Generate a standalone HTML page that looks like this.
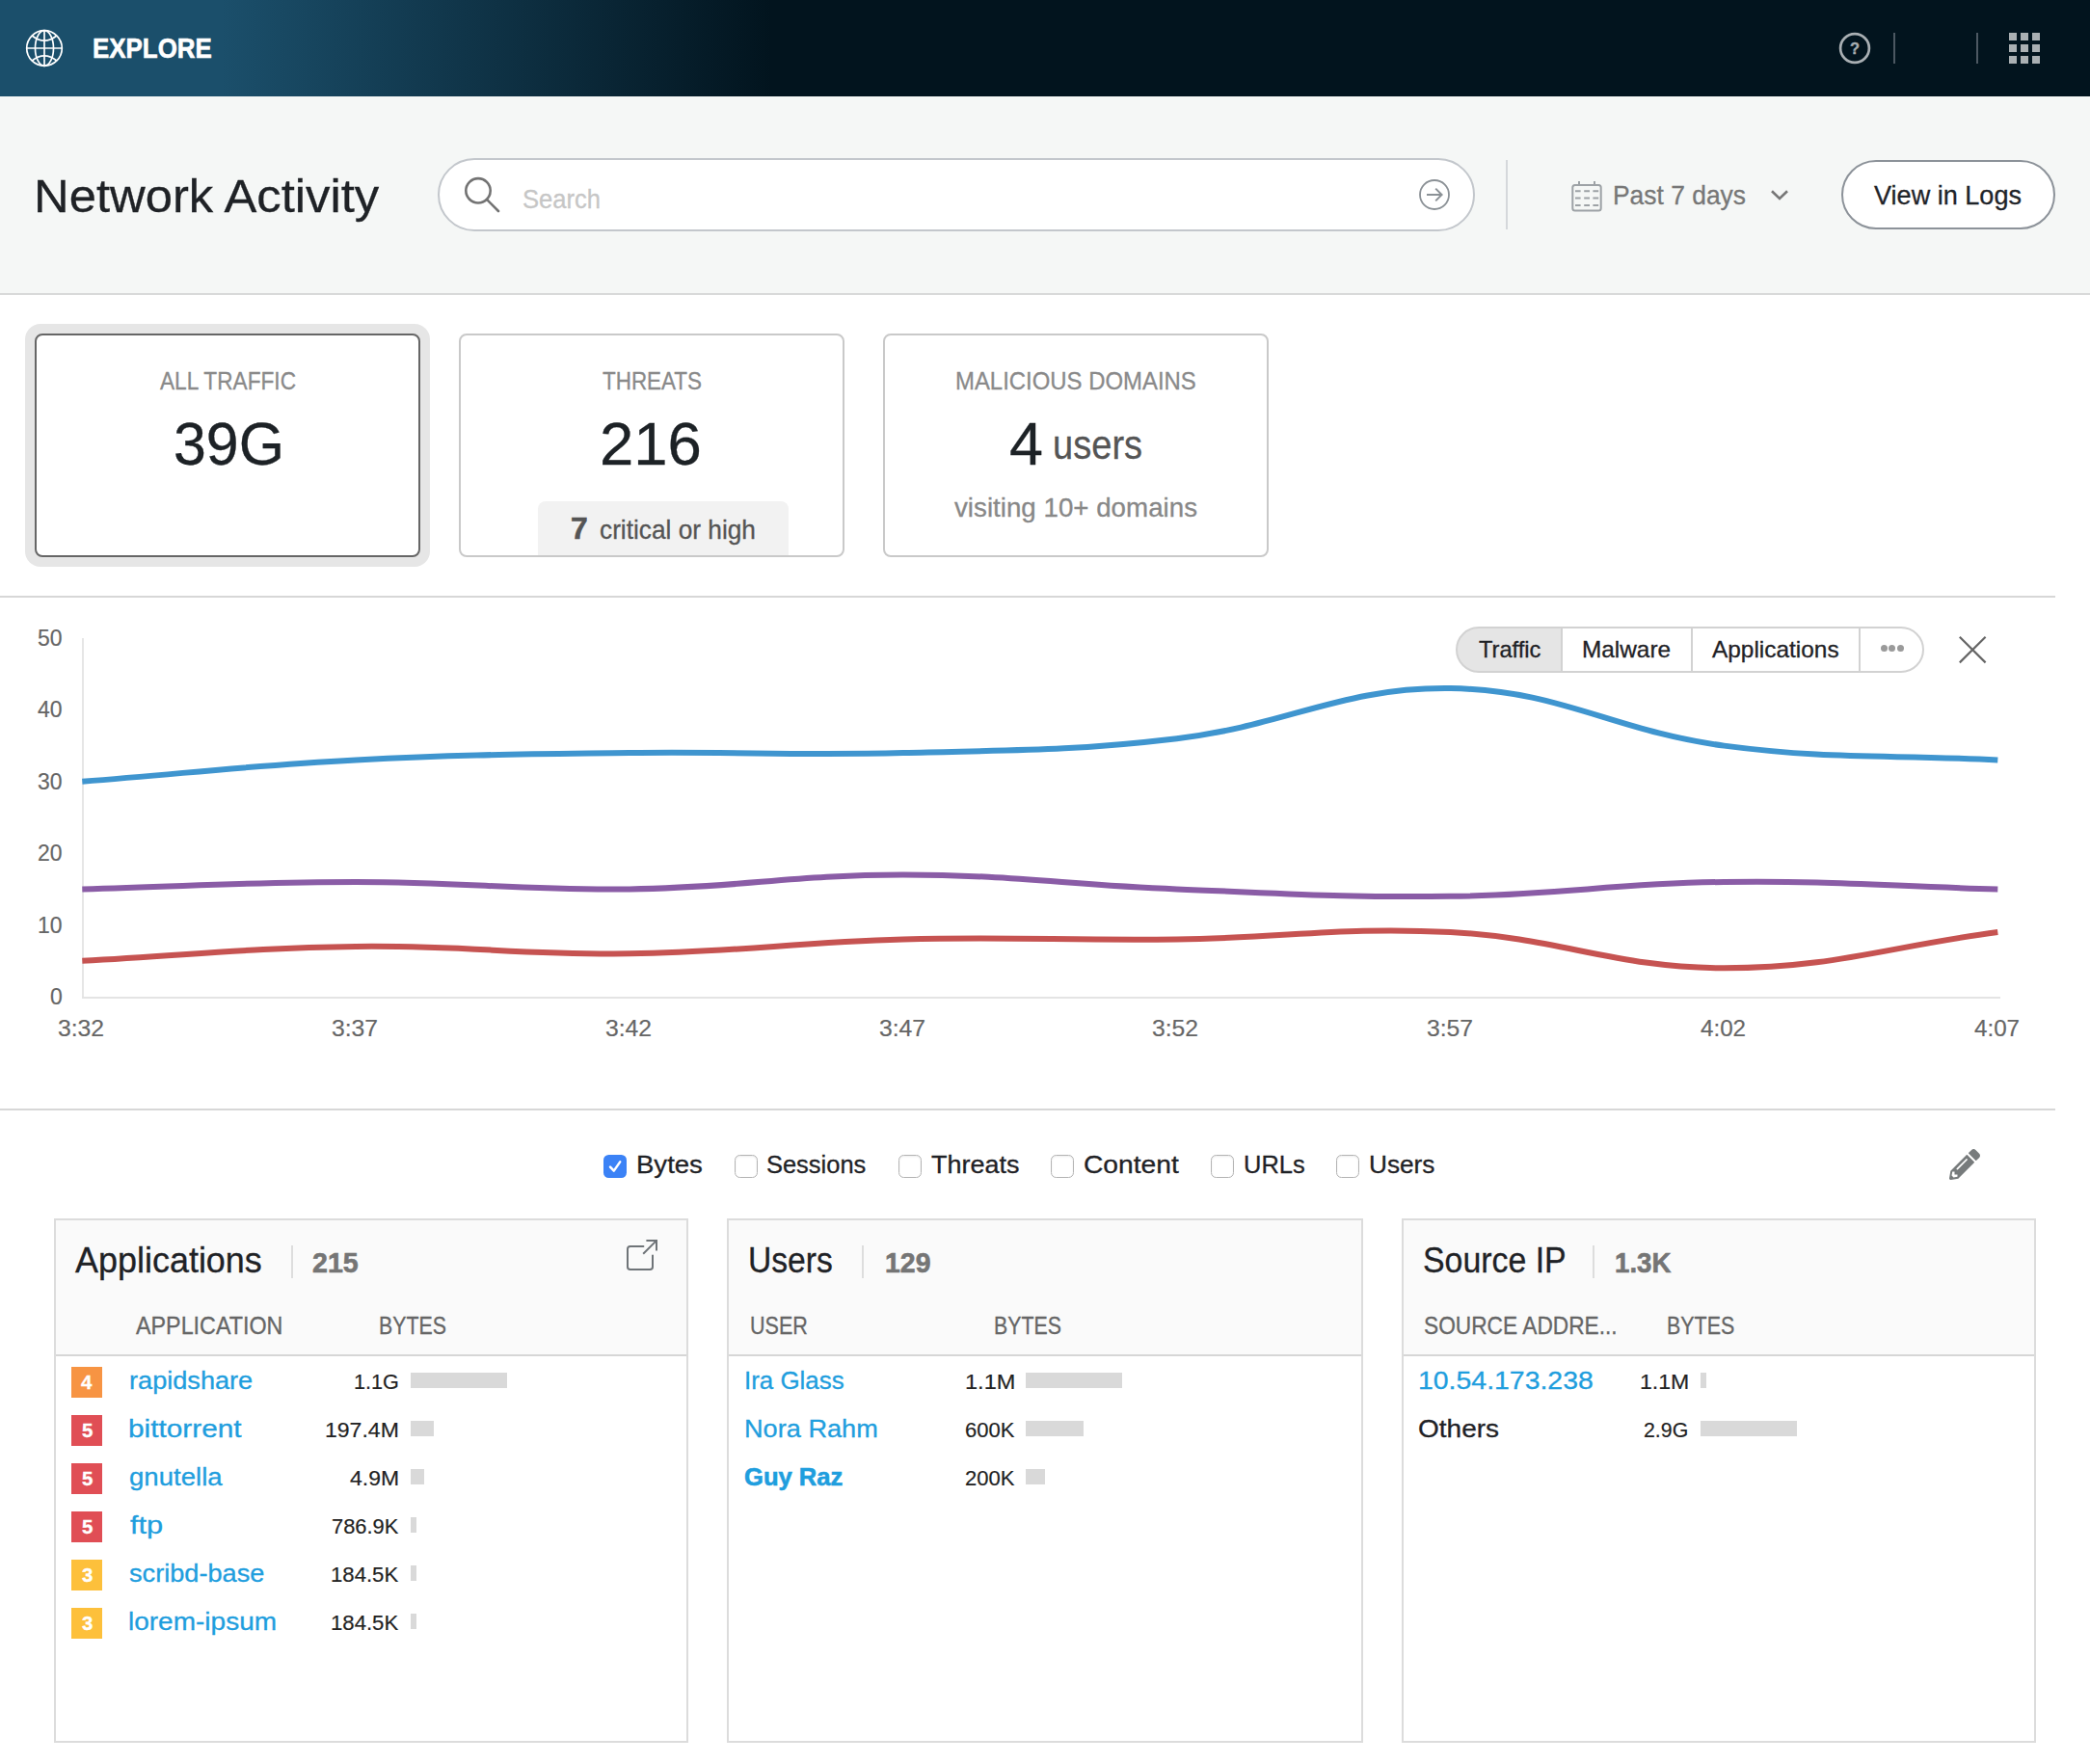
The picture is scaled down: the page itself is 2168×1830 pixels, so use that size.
<!DOCTYPE html>
<html lang="en"><head><meta charset="utf-8"><title>Explore - Network Activity</title>
<style>
html,body{margin:0;padding:0;}
body{width:2168px;height:1830px;position:relative;overflow:hidden;background:#fff;font-family:"Liberation Sans",Arial,Helvetica,sans-serif;}
.b{position:absolute;display:block;}
.t{position:absolute;white-space:nowrap;line-height:1;transform-origin:0 0;}
</style></head><body>
<div class="b" style="left:0px;top:0px;width:2168px;height:100px;background:linear-gradient(90deg,#1b4f6b 230px,#02141e 800px);"></div>
<svg class="b" style="left:24px;top:28px" width="44" height="44" viewBox="-22 -22 44 44" fill="none" stroke="#fff" stroke-width="1.7">
<circle r="18.300"/><path d="M0-18.300V18.300M-18.300 0H18.300"/><ellipse rx="9.500" ry="18.300"/>
<path d="M-12.800-13Q0-2.600 12.800-13M-12.800 13Q0 2.600 12.800 13"/></svg>
<div class="t" id="t0" style="left:96.20px;top:35px;font-size:29.6px;color:#fff;transform:scaleX(0.8755);font-weight:bold;-webkit-text-stroke:0.60px #fff;">EXPLORE</div>
<svg class="b" style="left:1904px;top:30px" width="40" height="40" viewBox="-20 -20 40 40"><circle r="14.9" fill="none" stroke="#a9afb3" stroke-width="2.7"/></svg>
<div class="t" id="t1" style="left:1918.65px;top:42px;font-size:16.5px;color:#a6adb1;transform:scaleX(0.9985);font-weight:bold;-webkit-text-stroke:0.36px #a6adb1;">?</div>
<div class="b" style="left:1964px;top:34px;width:2px;height:32px;background:#4c5862;"></div>
<div class="b" style="left:2050px;top:34px;width:2px;height:32px;background:#4c5862;"></div>
<div class="b" style="left:2084px;top:34px;width:8px;height:8px;background:#aab0b3;"></div>
<div class="b" style="left:2096px;top:34px;width:8px;height:8px;background:#aab0b3;"></div>
<div class="b" style="left:2108px;top:34px;width:8px;height:8px;background:#aab0b3;"></div>
<div class="b" style="left:2084px;top:46px;width:8px;height:8px;background:#aab0b3;"></div>
<div class="b" style="left:2096px;top:46px;width:8px;height:8px;background:#aab0b3;"></div>
<div class="b" style="left:2108px;top:46px;width:8px;height:8px;background:#aab0b3;"></div>
<div class="b" style="left:2084px;top:58px;width:8px;height:8px;background:#aab0b3;"></div>
<div class="b" style="left:2096px;top:58px;width:8px;height:8px;background:#aab0b3;"></div>
<div class="b" style="left:2108px;top:58px;width:8px;height:8px;background:#aab0b3;"></div>
<div class="b" style="left:0px;top:100px;width:2168px;height:204px;background:#f5f7f6;"></div>
<div class="b" style="left:0px;top:304px;width:2168px;height:2px;background:#d8d9d9;"></div>
<div class="t" id="t2" style="left:35.40px;top:180px;font-size:48px;color:#1f2226;transform:scaleX(1.0576);-webkit-text-stroke:0.30px #1f2226;">Network Activity</div>
<div class="b" style="left:454px;top:164px;width:1076px;height:76px;box-sizing:border-box;border:2px solid #c3c7cc;border-radius:38px;background:#fff;"></div>
<svg class="b" style="left:478px;top:180px" width="44" height="44" viewBox="478 180 44 44" fill="none" stroke="#737373" stroke-width="2.6" stroke-linecap="round"><circle cx="496" cy="197.8" r="12.7"/><path d="M505.2 207.2L517 219"/></svg>
<div class="t" id="t3" style="left:542.00px;top:193px;font-size:28px;color:#c6c6c6;transform:scaleX(0.9139);-webkit-text-stroke:0.30px #c6c6c6;">Search</div>
<svg class="b" style="left:1468px;top:182px" width="40" height="40" viewBox="-20 -20 40 40" fill="none" stroke="#8b9196" stroke-width="1.8"><circle r="15"/><path d="M-8 0H7.6M1.2-6.4L7.6 0L1.2 6.4" stroke-width="2"/></svg>
<div class="b" style="left:1562px;top:166px;width:2px;height:72px;background:#d5d8db;"></div>
<svg class="b" style="left:1626px;top:184px" width="40" height="40" viewBox="1626 184 40 40" fill="none" stroke="#9da2a6" stroke-width="2">
<rect x="1631.3" y="192" width="29.4" height="26.6" rx="2.5"/><path d="M1638 188V192M1654 188V192"/>
<path d="M1634 198.3h5.6M1643.2 198.3h5.8M1652.4 198.3h5.8M1634 205.6h5.6M1643.2 205.6h5.8M1652.4 205.6h5.8M1634 213h5.6M1643.2 213h5.8M1652.4 213h5.8"/></svg>
<div class="t" id="t4" style="left:1673.00px;top:189px;font-size:28px;color:#777;transform:scaleX(0.9435);-webkit-text-stroke:0.30px #777;">Past 7 days</div>
<svg class="b" style="left:1832px;top:192px" width="28" height="20" viewBox="1832 192 28 20" fill="none" stroke="#777" stroke-width="2.6"><path d="M1838 198.2L1846 206L1854 198.2"/></svg>
<div class="b" style="left:1910px;top:166px;width:222px;height:72px;box-sizing:border-box;border:2px solid #8c9299;border-radius:36px;background:#fff;"></div>
<div class="t" id="t5" style="left:1944.40px;top:189px;font-size:28px;color:#1f2429;transform:scaleX(0.9667);-webkit-text-stroke:0.30px #1f2429;">View in Logs</div>
<div class="b" style="left:26px;top:336px;width:420px;height:252px;background:#e6e6e6;border-radius:16px;"></div>
<div class="b" style="left:36px;top:346px;width:400px;height:232px;box-sizing:border-box;border:2px solid #666;border-radius:8px;background:#fff;"></div>
<div class="b" style="left:476px;top:346px;width:400px;height:232px;box-sizing:border-box;border:2px solid #c9c9c9;border-radius:8px;background:#fff;"></div>
<div class="b" style="left:916px;top:346px;width:400px;height:232px;box-sizing:border-box;border:2px solid #c9c9c9;border-radius:8px;background:#fff;"></div>
<div class="t" id="t6" style="left:166.20px;top:383px;font-size:25.5px;color:#8a8a8a;transform:scaleX(0.8884);-webkit-text-stroke:0.30px #8a8a8a;">ALL TRAFFIC</div>
<div class="t" id="t7" style="left:179.80px;top:429px;font-size:63px;color:#1d2226;transform:scaleX(0.9654);-webkit-text-stroke:0.30px #1d2226;">39G</div>
<div class="t" id="t8" style="left:625.00px;top:383px;font-size:25.5px;color:#8a8a8a;transform:scaleX(0.8795);-webkit-text-stroke:0.30px #8a8a8a;">THREATS</div>
<div class="t" id="t9" style="left:622.20px;top:429px;font-size:63px;color:#1d2226;transform:scaleX(1.0071);-webkit-text-stroke:0.30px #1d2226;">216</div>
<div class="b" style="left:558px;top:520px;width:260px;height:56px;background:#f2f2f2;border-radius:8px 8px 0 0;"></div>
<div class="t" id="t10" style="left:592.20px;top:532px;font-size:32px;color:#555;transform:scaleX(0.9985);font-weight:bold;-webkit-text-stroke:0.60px #555;">7</div>
<div class="t" id="t11" style="left:621.80px;top:536px;font-size:27.2px;color:#555;transform:scaleX(0.9656);-webkit-text-stroke:0.30px #555;">critical or high</div>
<div class="t" id="t12" style="left:990.80px;top:383px;font-size:25.5px;color:#8a8a8a;transform:scaleX(0.9376);-webkit-text-stroke:0.30px #8a8a8a;">MALICIOUS DOMAINS</div>
<div class="t" id="t13" style="left:1047.40px;top:429px;font-size:63px;color:#1d2226;transform:scaleX(0.9985);-webkit-text-stroke:0.30px #1d2226;">4</div>
<div class="t" id="t14" style="left:1091.80px;top:441px;font-size:42.5px;color:#555;transform:scaleX(0.8959);-webkit-text-stroke:0.30px #555;">users</div>
<div class="t" id="t15" style="left:990.20px;top:513px;font-size:27.5px;color:#888;transform:scaleX(1.0083);-webkit-text-stroke:0.30px #888;">visiting 10+ domains</div>
<div class="b" style="left:0px;top:618px;width:2132px;height:2px;background:#d7d7d7;"></div>
<div class="b" style="left:0px;top:1150px;width:2132px;height:2px;background:#d7d7d7;"></div>
<div class="b" style="left:85px;top:662px;width:2px;height:374px;background:#e6e6e6;"></div>
<div class="b" style="left:85px;top:1034px;width:1990px;height:2px;background:#e4e4e4;"></div>
<div class="t" id="t16" style="left:51.81px;top:1023px;font-size:23px;color:#666;transform:scaleX(0.9985);-webkit-text-stroke:0.18px #666;">0</div>
<div class="t" id="t17" style="left:39.01px;top:949px;font-size:23px;color:#666;transform:scaleX(0.9985);-webkit-text-stroke:0.18px #666;">10</div>
<div class="t" id="t18" style="left:39.01px;top:874px;font-size:23px;color:#666;transform:scaleX(0.9985);-webkit-text-stroke:0.18px #666;">20</div>
<div class="t" id="t19" style="left:39.01px;top:800px;font-size:23px;color:#666;transform:scaleX(0.9985);-webkit-text-stroke:0.18px #666;">30</div>
<div class="t" id="t20" style="left:39.01px;top:725px;font-size:23px;color:#666;transform:scaleX(0.9985);-webkit-text-stroke:0.18px #666;">40</div>
<div class="t" id="t21" style="left:39.01px;top:651px;font-size:23px;color:#666;transform:scaleX(0.9985);-webkit-text-stroke:0.18px #666;">50</div>
<div class="t" id="t22" style="left:60.00px;top:1056px;font-size:23px;color:#666;transform:scaleX(1.0742);-webkit-text-stroke:0.18px #666;">3:32</div>
<div class="t" id="t23" style="left:344.32px;top:1056px;font-size:23px;color:#666;transform:scaleX(1.0742);-webkit-text-stroke:0.18px #666;">3:37</div>
<div class="t" id="t24" style="left:627.64px;top:1056px;font-size:23px;color:#666;transform:scaleX(1.0742);-webkit-text-stroke:0.18px #666;">3:42</div>
<div class="t" id="t25" style="left:911.96px;top:1056px;font-size:23px;color:#666;transform:scaleX(1.0742);-webkit-text-stroke:0.18px #666;">3:47</div>
<div class="t" id="t26" style="left:1195.28px;top:1056px;font-size:23px;color:#666;transform:scaleX(1.0742);-webkit-text-stroke:0.18px #666;">3:52</div>
<div class="t" id="t27" style="left:1479.60px;top:1056px;font-size:23px;color:#666;transform:scaleX(1.0742);-webkit-text-stroke:0.18px #666;">3:57</div>
<div class="t" id="t28" style="left:1763.92px;top:1056px;font-size:23px;color:#666;transform:scaleX(1.0504);-webkit-text-stroke:0.18px #666;">4:02</div>
<div class="t" id="t29" style="left:2048.24px;top:1056px;font-size:23px;color:#666;transform:scaleX(1.0504);-webkit-text-stroke:0.18px #666;">4:07</div>
<svg class="b" style="left:0;top:640px" width="2168" height="420" viewBox="0 640 2168 420" fill="none" stroke-width="6" stroke-linejoin="round"><path d="M85.30,810.80C198.84,801.87 255.46,794.44 369.16,788.48C482.55,782.54 539.46,782.53 653.02,781.04C766.54,779.55 823.41,784.01 936.88,781.04C1050.50,778.06 1108.06,779.45 1220.74,766.16C1335.15,752.67 1391.34,712.60 1504.60,714.08C1618.43,715.57 1673.77,758.57 1788.46,773.60C1900.86,788.33 1958.78,782.53 2072.32,788.48" stroke="#3f95cf"/><path d="M85.30,922.40C198.84,919.42 255.62,914.96 369.16,914.96C482.70,914.96 539.53,923.89 653.02,922.40C766.62,920.91 823.34,907.52 936.88,907.52C1050.42,907.52 1107.14,917.93 1220.74,922.40C1334.23,926.86 1391.11,931.33 1504.60,929.84C1618.20,928.35 1674.86,916.45 1788.46,914.96C1901.95,913.47 1958.78,919.42 2072.32,922.40" stroke="#8a5ca6"/><path d="M85.30,996.80C198.84,990.85 255.56,983.41 369.16,981.92C482.65,980.43 539.53,990.85 653.02,989.36C766.62,987.87 823.26,977.46 936.88,974.48C1050.35,971.51 1107.22,975.97 1220.74,974.48C1334.30,972.99 1391.52,961.11 1504.60,967.04C1618.61,973.02 1674.92,1004.24 1788.46,1004.24C1902.00,1004.24 1958.78,981.92 2072.32,967.04" stroke="#c65351"/></svg>
<div class="b" style="left:1510px;top:650px;width:486px;height:48px;box-sizing:border-box;border:2px solid #d2d2d2;border-radius:24px;background:linear-gradient(90deg,#e5e5e5 108.6px,#fff 108.6px);"></div>
<div class="b" style="left:1618.6px;top:652px;width:2px;height:44px;background:#d2d2d2;"></div>
<div class="b" style="left:1753.8px;top:652px;width:2px;height:44px;background:#d2d2d2;"></div>
<div class="b" style="left:1927.8px;top:652px;width:2px;height:44px;background:#d2d2d2;"></div>
<div class="t" id="t30" style="left:1533.60px;top:662px;font-size:24px;color:#1f2226;transform:scaleX(0.9858);-webkit-text-stroke:0.30px #1f2226;">Traffic</div>
<div class="t" id="t31" style="left:1641.20px;top:662px;font-size:24px;color:#1f2226;transform:scaleX(1.0148);-webkit-text-stroke:0.30px #1f2226;">Malware</div>
<div class="t" id="t32" style="left:1776.40px;top:662px;font-size:24px;color:#1f2226;transform:scaleX(1.0170);-webkit-text-stroke:0.30px #1f2226;">Applications</div>
<div class="b" style="left:1951.1px;top:669.2px;width:7px;height:7px;background:#9a9a9a;border-radius:50%;"></div>
<div class="b" style="left:1959.3px;top:669.2px;width:7px;height:7px;background:#9a9a9a;border-radius:50%;"></div>
<div class="b" style="left:1967.5px;top:669.2px;width:7px;height:7px;background:#9a9a9a;border-radius:50%;"></div>
<svg class="b" style="left:2026px;top:654px" width="40" height="40" viewBox="2026 654 40 40" fill="none" stroke="#666" stroke-width="2.2"><path d="M2032.8 660.8L2059.6 687.4M2059.6 660.8L2032.8 687.4"/></svg>
<div class="b" style="left:626px;top:1198px;width:24px;height:24px;background:#3b82f6;border-radius:5.5px;"></div>
<svg class="b" style="left:626px;top:1198px" width="24" height="24" viewBox="0 0 24 24" fill="none" stroke="#fff" stroke-width="2.5" stroke-linecap="round" stroke-linejoin="round"><path d="M7 12.600L10.800 16.600L17.200 7.400"/></svg>
<div class="t" id="t33" style="left:660.00px;top:1195px;font-size:26px;color:#1f2226;transform:scaleX(1.0594);-webkit-text-stroke:0.30px #1f2226;">Bytes</div>
<div class="b" style="left:762px;top:1198px;width:24px;height:24px;box-sizing:border-box;border:1.5px solid #b4b4b4;border-radius:5.5px;background:#fff;box-shadow:inset 0 1px 2px rgba(0,0,0,.08);"></div>
<div class="t" id="t34" style="left:795.40px;top:1195px;font-size:26px;color:#1f2226;transform:scaleX(0.9787);-webkit-text-stroke:0.30px #1f2226;">Sessions</div>
<div class="b" style="left:932px;top:1198px;width:24px;height:24px;box-sizing:border-box;border:1.5px solid #b4b4b4;border-radius:5.5px;background:#fff;box-shadow:inset 0 1px 2px rgba(0,0,0,.08);"></div>
<div class="t" id="t35" style="left:966.20px;top:1195px;font-size:26px;color:#1f2226;transform:scaleX(1.0371);-webkit-text-stroke:0.30px #1f2226;">Threats</div>
<div class="b" style="left:1090px;top:1198px;width:24px;height:24px;box-sizing:border-box;border:1.5px solid #b4b4b4;border-radius:5.5px;background:#fff;box-shadow:inset 0 1px 2px rgba(0,0,0,.08);"></div>
<div class="t" id="t36" style="left:1124.00px;top:1195px;font-size:26px;color:#1f2226;transform:scaleX(1.0849);-webkit-text-stroke:0.30px #1f2226;">Content</div>
<div class="b" style="left:1256px;top:1198px;width:24px;height:24px;box-sizing:border-box;border:1.5px solid #b4b4b4;border-radius:5.5px;background:#fff;box-shadow:inset 0 1px 2px rgba(0,0,0,.08);"></div>
<div class="t" id="t37" style="left:1290.40px;top:1195px;font-size:26px;color:#1f2226;transform:scaleX(0.9789);-webkit-text-stroke:0.30px #1f2226;">URLs</div>
<div class="b" style="left:1386px;top:1198px;width:24px;height:24px;box-sizing:border-box;border:1.5px solid #b4b4b4;border-radius:5.5px;background:#fff;box-shadow:inset 0 1px 2px rgba(0,0,0,.08);"></div>
<div class="t" id="t38" style="left:1420.40px;top:1195px;font-size:26px;color:#1f2226;transform:scaleX(1.0078);-webkit-text-stroke:0.30px #1f2226;">Users</div>
<svg class="b" style="left:2022px;top:1192px" width="32" height="32" viewBox="0 0 512 512"><path fill="#777b7c" fill-rule="evenodd" d="M497.9 142.1l-46.1 46.1c-4.7 4.7-12.3 4.7-17 0l-111-111c-4.7-4.7-4.7-12.3 0-17l46.1-46.1c18.7-18.7 49.1-18.7 67.9 0l60.1 60.1c18.8 18.7 18.8 49.1 0 67.900zM284.200 99.800L21.600 362.400.4 483.900c-2.900 16.400 11.400 30.600 27.800 27.800l121.500-21.300 262.600-262.600c4.700-4.700 4.700-12.300 0-17l-111-111c-4.800-4.700-12.400-4.700-17.100 0zM124.100 339.900c-5.500-5.500-5.500-14.300 0-19.800l154-154c5.500-5.500 14.300-5.500 19.800 0s5.500 14.300 0 19.800l-154 154c-5.500 5.500-14.300 5.500-19.800 0zM88 424h48v36.300l-64.500 11.300-31.100-31.100L51.700 376H88v48z"/></svg>
<div class="b" style="left:56px;top:1264px;width:658px;height:544px;box-sizing:border-box;border:2px solid #dcdcdc;background:#fff;"></div>
<div class="b" style="left:58px;top:1266px;width:654px;height:138.5px;background:#fafafa;"></div>
<div class="b" style="left:58px;top:1404.5px;width:654px;height:2px;background:#d6d6d6;"></div>
<div class="t" id="t39" style="left:78.00px;top:1290px;font-size:36px;color:#1f2226;transform:scaleX(0.9985);-webkit-text-stroke:0.30px #1f2226;">Applications</div>
<div class="b" style="left:302px;top:1292px;width:2px;height:34px;background:#ddd;"></div>
<div class="t" id="t40" style="left:324.20px;top:1295px;font-size:29.6px;color:#757575;transform:scaleX(0.9650);font-weight:bold;-webkit-text-stroke:0.60px #757575;">215</div>
<svg class="b" style="left:646px;top:1282px" width="40" height="40" viewBox="646 1282 40 40" fill="none" stroke="#6f7478" stroke-width="2" stroke-linecap="round"><path d="M667.4 1293H653.8Q651 1293 651 1295.800V1314.200Q651 1317 653.800 1317H674.200Q677 1317 677 1314.200V1302.600"/><path d="M670.400 1287H681V1297.600M680.600 1287.400L667.200 1300.800" stroke-linecap="butt"/></svg>
<div class="t" id="t41" style="left:140.80px;top:1363px;font-size:25px;color:#666;transform:scaleX(0.9322);-webkit-text-stroke:0.30px #666;">APPLICATION</div>
<div class="t" id="t42" style="left:392.60px;top:1363px;font-size:25px;color:#666;transform:scaleX(0.8522);-webkit-text-stroke:0.30px #666;">BYTES</div>
<div class="b" style="left:74px;top:1418px;width:32px;height:32px;background:#f79443;"></div>
<div class="t" id="t43" style="left:84.30px;top:1424px;font-size:20.5px;color:#fff;transform:scaleX(0.9985);font-weight:bold;-webkit-text-stroke:0.36px #fff;">4</div>
<div class="t" id="t44" style="left:133.60px;top:1420px;font-size:25.6px;color:#1f9ede;transform:scaleX(1.0602);-webkit-text-stroke:0.30px #1f9ede;">rapidshare</div>
<div class="t" id="t45" style="left:367.40px;top:1423px;font-size:22.6px;color:#222;transform:scaleX(0.9573);-webkit-text-stroke:0.18px #222;">1.1G</div>
<div class="b" style="left:426px;top:1424px;width:100px;height:16px;background:#d9d9d9;"></div>
<div class="b" style="left:74px;top:1468px;width:32px;height:32px;background:#e04e55;"></div>
<div class="t" id="t46" style="left:84.80px;top:1474px;font-size:20.5px;color:#fff;transform:scaleX(0.9985);font-weight:bold;-webkit-text-stroke:0.36px #fff;">5</div>
<div class="t" id="t47" style="left:132.60px;top:1470px;font-size:25.6px;color:#1f9ede;transform:scaleX(1.1643);-webkit-text-stroke:0.30px #1f9ede;">bittorrent</div>
<div class="t" id="t48" style="left:337.40px;top:1473px;font-size:22.6px;color:#222;transform:scaleX(1.0194);-webkit-text-stroke:0.18px #222;">197.4M</div>
<div class="b" style="left:426px;top:1474px;width:24px;height:16px;background:#d9d9d9;"></div>
<div class="b" style="left:74px;top:1518px;width:32px;height:32px;background:#e04e55;"></div>
<div class="t" id="t49" style="left:84.80px;top:1524px;font-size:20.5px;color:#fff;transform:scaleX(0.9985);font-weight:bold;-webkit-text-stroke:0.36px #fff;">5</div>
<div class="t" id="t50" style="left:133.60px;top:1520px;font-size:25.6px;color:#1f9ede;transform:scaleX(1.0776);-webkit-text-stroke:0.30px #1f9ede;">gnutella</div>
<div class="t" id="t51" style="left:363.20px;top:1523px;font-size:22.6px;color:#222;transform:scaleX(1.0156);-webkit-text-stroke:0.18px #222;">4.9M</div>
<div class="b" style="left:426px;top:1524px;width:14px;height:16px;background:#d9d9d9;"></div>
<div class="b" style="left:74px;top:1568px;width:32px;height:32px;background:#e04e55;"></div>
<div class="t" id="t52" style="left:84.80px;top:1574px;font-size:20.5px;color:#fff;transform:scaleX(0.9985);font-weight:bold;-webkit-text-stroke:0.36px #fff;">5</div>
<div class="t" id="t53" style="left:134.60px;top:1570px;font-size:25.6px;color:#1f9ede;transform:scaleX(1.2032);-webkit-text-stroke:0.30px #1f9ede;">ftp</div>
<div class="t" id="t54" style="left:343.80px;top:1573px;font-size:22.6px;color:#222;transform:scaleX(0.9692);-webkit-text-stroke:0.18px #222;">786.9K</div>
<div class="b" style="left:426px;top:1574px;width:6px;height:16px;background:#d9d9d9;"></div>
<div class="b" style="left:74px;top:1618px;width:32px;height:32px;background:#fdc03b;"></div>
<div class="t" id="t55" style="left:84.80px;top:1624px;font-size:20.5px;color:#fff;transform:scaleX(0.9985);font-weight:bold;-webkit-text-stroke:0.36px #fff;">3</div>
<div class="t" id="t56" style="left:133.60px;top:1620px;font-size:25.6px;color:#1f9ede;transform:scaleX(1.0610);-webkit-text-stroke:0.30px #1f9ede;">scribd-base</div>
<div class="t" id="t57" style="left:343.00px;top:1623px;font-size:22.6px;color:#222;transform:scaleX(0.9803);-webkit-text-stroke:0.18px #222;">184.5K</div>
<div class="b" style="left:426px;top:1624px;width:6px;height:16px;background:#d9d9d9;"></div>
<div class="b" style="left:74px;top:1668px;width:32px;height:32px;background:#fdc03b;"></div>
<div class="t" id="t58" style="left:84.80px;top:1674px;font-size:20.5px;color:#fff;transform:scaleX(0.9985);font-weight:bold;-webkit-text-stroke:0.36px #fff;">3</div>
<div class="t" id="t59" style="left:132.60px;top:1670px;font-size:25.6px;color:#1f9ede;transform:scaleX(1.0940);-webkit-text-stroke:0.30px #1f9ede;">lorem-ipsum</div>
<div class="t" id="t60" style="left:343.00px;top:1673px;font-size:22.6px;color:#222;transform:scaleX(0.9803);-webkit-text-stroke:0.18px #222;">184.5K</div>
<div class="b" style="left:426px;top:1674px;width:6px;height:16px;background:#d9d9d9;"></div>
<div class="b" style="left:754px;top:1264px;width:660px;height:544px;box-sizing:border-box;border:2px solid #dcdcdc;background:#fff;"></div>
<div class="b" style="left:756px;top:1266px;width:656px;height:138.5px;background:#fafafa;"></div>
<div class="b" style="left:756px;top:1404.5px;width:656px;height:2px;background:#d6d6d6;"></div>
<div class="t" id="t61" style="left:776.00px;top:1290px;font-size:36px;color:#1f2226;transform:scaleX(0.9347);-webkit-text-stroke:0.30px #1f2226;">Users</div>
<div class="b" style="left:894px;top:1292px;width:2px;height:34px;background:#ddd;"></div>
<div class="t" id="t62" style="left:917.60px;top:1295px;font-size:29.6px;color:#757575;transform:scaleX(0.9608);font-weight:bold;-webkit-text-stroke:0.60px #757575;">129</div>
<div class="t" id="t63" style="left:778.20px;top:1363px;font-size:25px;color:#666;transform:scaleX(0.8618);-webkit-text-stroke:0.30px #666;">USER</div>
<div class="t" id="t64" style="left:1031.20px;top:1363px;font-size:25px;color:#666;transform:scaleX(0.8522);-webkit-text-stroke:0.30px #666;">BYTES</div>
<div class="t" id="t65" style="left:772.20px;top:1420px;font-size:25.6px;color:#1f9ede;transform:scaleX(1.0119);-webkit-text-stroke:0.30px #1f9ede;">Ira Glass</div>
<div class="t" id="t66" style="left:1000.80px;top:1423px;font-size:22.6px;color:#222;transform:scaleX(1.0425);-webkit-text-stroke:0.18px #222;">1.1M</div>
<div class="b" style="left:1064px;top:1424px;width:100px;height:16px;background:#d9d9d9;"></div>
<div class="t" id="t67" style="left:772.20px;top:1470px;font-size:25.6px;color:#1f9ede;transform:scaleX(1.0609);-webkit-text-stroke:0.30px #1f9ede;">Nora Rahm</div>
<div class="t" id="t68" style="left:1000.80px;top:1473px;font-size:22.6px;color:#222;transform:scaleX(0.9746);-webkit-text-stroke:0.18px #222;">600K</div>
<div class="b" style="left:1064px;top:1474px;width:60px;height:16px;background:#d9d9d9;"></div>
<div class="t" id="t69" style="left:772.00px;top:1520px;font-size:25.6px;color:#1f9ede;transform:scaleX(0.9985);font-weight:bold;-webkit-text-stroke:0.60px #1f9ede;">Guy Raz</div>
<div class="t" id="t70" style="left:1000.80px;top:1523px;font-size:22.6px;color:#222;transform:scaleX(0.9746);-webkit-text-stroke:0.18px #222;">200K</div>
<div class="b" style="left:1064px;top:1524px;width:20px;height:16px;background:#d9d9d9;"></div>
<div class="b" style="left:1454px;top:1264px;width:658px;height:544px;box-sizing:border-box;border:2px solid #dcdcdc;background:#fff;"></div>
<div class="b" style="left:1456px;top:1266px;width:654px;height:138.5px;background:#fafafa;"></div>
<div class="b" style="left:1456px;top:1404.5px;width:654px;height:2px;background:#d6d6d6;"></div>
<div class="t" id="t71" style="left:1475.60px;top:1290px;font-size:36px;color:#1f2226;transform:scaleX(0.9401);-webkit-text-stroke:0.30px #1f2226;">Source IP</div>
<div class="b" style="left:1652px;top:1292px;width:2px;height:34px;background:#ddd;"></div>
<div class="t" id="t72" style="left:1675.00px;top:1295px;font-size:29.6px;color:#757575;transform:scaleX(0.9349);font-weight:bold;-webkit-text-stroke:0.60px #757575;">1.3K</div>
<div class="t" id="t73" style="left:1476.80px;top:1363px;font-size:25px;color:#666;transform:scaleX(0.9085);-webkit-text-stroke:0.30px #666;">SOURCE ADDRE...</div>
<div class="t" id="t74" style="left:1729.20px;top:1363px;font-size:25px;color:#666;transform:scaleX(0.8568);-webkit-text-stroke:0.30px #666;">BYTES</div>
<div class="t" id="t75" style="left:1471.00px;top:1420px;font-size:25.6px;color:#1f9ede;transform:scaleX(1.1107);-webkit-text-stroke:0.30px #1f9ede;">10.54.173.238</div>
<div class="t" id="t76" style="left:1700.60px;top:1423px;font-size:22.6px;color:#222;transform:scaleX(1.0213);-webkit-text-stroke:0.18px #222;">1.1M</div>
<div class="b" style="left:1764px;top:1424px;width:6px;height:16px;background:#d9d9d9;"></div>
<div class="t" id="t77" style="left:1471.20px;top:1470px;font-size:25.6px;color:#1f2226;transform:scaleX(1.0941);-webkit-text-stroke:0.30px #1f2226;">Others</div>
<div class="t" id="t78" style="left:1705.40px;top:1473px;font-size:22.6px;color:#222;transform:scaleX(0.9446);-webkit-text-stroke:0.18px #222;">2.9G</div>
<div class="b" style="left:1764px;top:1474px;width:100px;height:16px;background:#d9d9d9;"></div>
</body></html>
